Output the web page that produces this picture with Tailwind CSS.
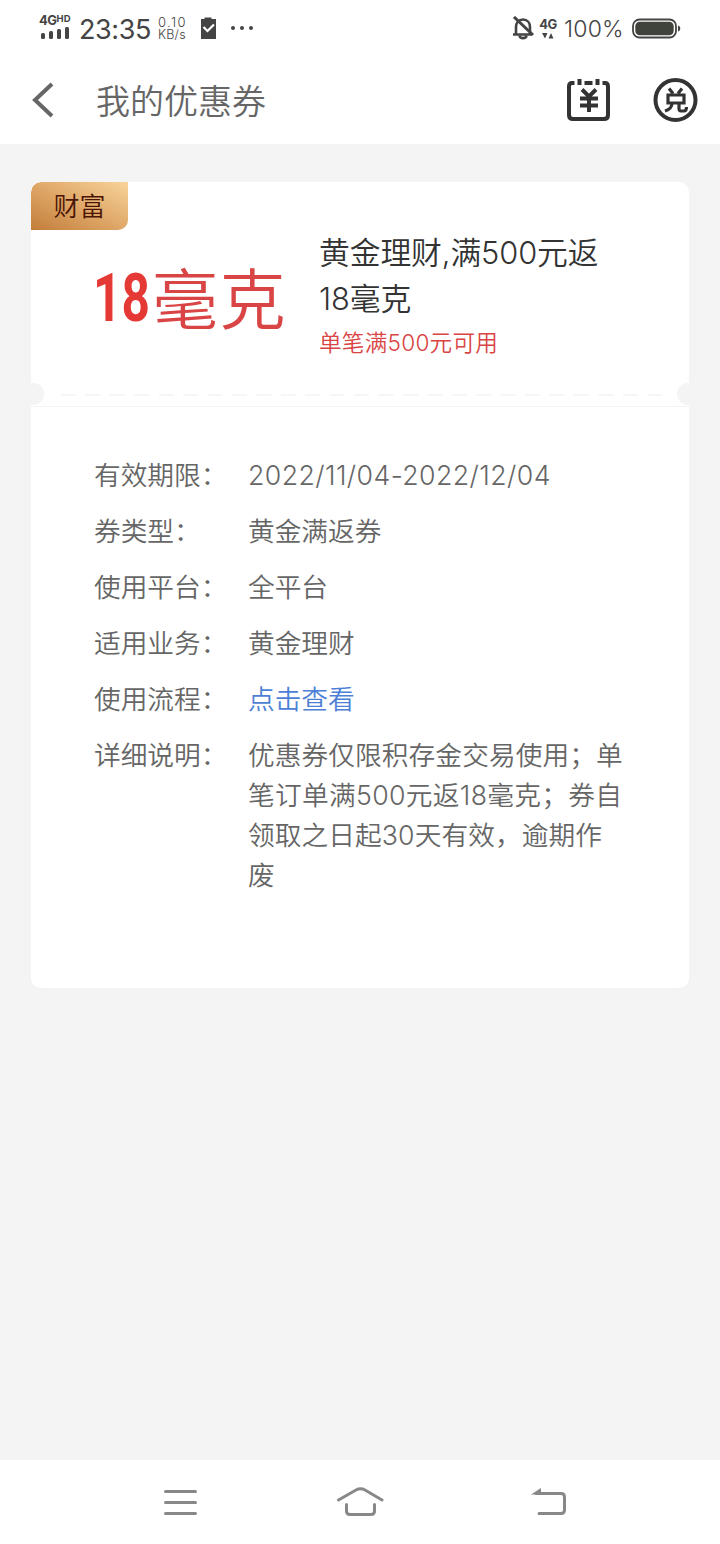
<!DOCTYPE html>
<html lang="zh-CN">
<head>
    <meta charset="UTF-8">
    <meta name="viewport" content="width=device-width, initial-scale=1.0">
    <title>我的优惠券</title>
    <script src="https://cdn.jsdelivr.net/npm/@tailwindcss/browser@4"></script>
</head>
<body class="bg-[#f4f4f4] font-['Inter','Noto_Sans_CJK_SC',sans-serif] font-[350]">
    <div class="flex flex-col w-[720px] h-[1544px] overflow-hidden whitespace-nowrap">
        <!-- Status bar -->
        <div class="flex items-center justify-between h-14 pl-[39px] pr-[39px] bg-white text-[#444]">
            <div class="flex items-center">
                <div class="flex flex-col w-8 -mt-[2px]">
                    <div class="flex items-start h-[12px] leading-[11px] font-bold"><span class="text-[13px] tracking-[-0.5px]">4G</span><span class="text-[9.5px] leading-[8px]">HD</span></div>
                    <svg class="w-8 h-3" viewBox="0 0 32 12" fill="currentColor">
                        <rect x="2" y="6" width="4" height="6" rx="1.5"/>
                        <rect x="10" y="4" width="4" height="8" rx="1.5"/>
                        <rect x="18" y="2" width="4" height="10" rx="1.5"/>
                        <rect x="26" y="0" width="4" height="12" rx="1.5"/>
                    </svg>
                </div>
                <span class="ml-2 w-[79px] pt-[3px] text-[27px] leading-8 font-normal tracking-[-0.4px]">23:35</span>
                <div class="flex flex-col w-[41px] pt-[1px] text-[12.5px] leading-[13px]">
                    <span class="h-[12px] text-[13px] tracking-[1.4px]">0.10</span>
                    <span class="h-[13px] tracking-[0.2px]">KB/s</span>
                </div>
                <svg class="w-5 h-6" viewBox="0 0 20 24">
                    <path fill="currentColor" d="M2 3h3.500V1.500h7V3H17v20H2z"/>
                    <path d="M4.500 11l4 4 6.500-6.500" fill="none" stroke="#fff" stroke-width="2.200"/>
                </svg>
                <svg class="ml-3 w-6 h-4" viewBox="0 0 24 16" fill="currentColor">
                    <circle cx="2" cy="8" r="2"/><circle cx="11" cy="8" r="2"/><circle cx="20" cy="8" r="2"/>
                </svg>
            </div>
            <div class="flex items-center">
                <svg class="w-6 h-6" viewBox="0 0 24 24" fill="none" stroke="currentColor" stroke-width="2.600">
                    <path d="M5 18.500V11c0-4 2.500-7.500 7-7.500S19 7 19 11v7.500M2 18.500h19"/>
                    <path d="M8.500 19.500c.5 3.500 6.500 3.500 7 0" />
                    <path d="M3 1l19 18" stroke-width="3"/>
                </svg>
                <div class="flex flex-col items-center w-[20px] ml-[3px] gap-[2px]">
                    <span class="text-[13px] leading-[12px] font-bold tracking-[-0.5px]">4G</span>
                    <svg class="w-3 h-[7px]" viewBox="0 0 12 7" fill="currentColor"><path d="M0 1h5.500L3 6.500zM6.500 6.500h5L9 1z"/></svg>
                </div>
                <span class="ml-[6px] w-[68px] pt-[2px] text-[23px] leading-8 tracking-[0.2px]">100%</span>
                <svg class="w-[49px] h-[21px]" viewBox="0 0 49 21">
                    <rect x="1" y="1.500" width="43" height="18" rx="6.500" fill="none" stroke="currentColor" stroke-width="1.800"/>
                    <rect x="3.300" y="3.800" width="38.400" height="13.400" rx="4.500" fill="#40423c"/>
                    <path d="M46 7.500c3 .5 3 5.500 0 6z" fill="currentColor"/>
                </svg>
            </div>
        </div>

        <!-- Title bar -->
        <div class="flex items-center h-[88px] pl-[31px] pr-[22px] bg-white text-[#666]">
            <svg class="w-6 h-10" viewBox="0 0 24 40" fill="none" stroke="currentColor" stroke-width="4">
                <path d="M21 4L4 20l17 16"/>
            </svg>
            <h1 class="ml-[41px] grow pt-[4px] text-[34px] leading-10">我的优惠券</h1>
            <svg class="w-[44px] h-[44px] text-[#333]" viewBox="0 0 44 44" fill="none" stroke="currentColor" stroke-width="4">
                <path d="M8.500 5H6Q3 5 3 8.500V37q0 4 4 4h31q4 0 4-4V8.500Q42 5 39 5H36.500M18.500 5h8"/>
                <path d="M13.500 1v6M31.500 1v6"/>
                <path d="M16 11.500l7 7 7-7M14 20.500h18M14 27.500h18M23 18v16"/>
            </svg>
            <svg class="ml-[43px] w-[45px] h-[45px] text-[#333]" viewBox="0 0 45 45" fill="none" stroke="currentColor" stroke-width="4">
                <circle cx="22.500" cy="22" r="20"/>
                <g stroke-width="3.200">
                    <path d="M16 10.500l4 5M29 10.500l-4 5M15 17h16v8H15z"/>
                    <path d="M19 24.500c0 5-2 7-7 8.500M26 24.500v6q0 2.500 2 2.500h3q2.500 0 2.500-4"/>
                </g>
            </svg>
        </div>

        <!-- Coupon -->
        <main class="grow px-[31px] pt-[38px]">
            <div class="relative h-[806px] bg-white rounded-[10px] overflow-hidden">
                <span class="absolute left-0 top-0 w-[97px] h-12 rounded-tl-[10px] rounded-br-[10px] bg-linear-to-tr from-[#c27d3a] via-[#dfa868] to-[#f8d49a] text-center text-[26px] leading-[49px] text-[#4a1505]">财富</span>
                <div class="flex h-[225px] border-b border-[#f4f4f4]">
                    <div class="flex items-start w-[288px] pl-[62px] pt-[70px] text-[#e53935]">
                        <span class="w-[59px] text-[67px] leading-[93px] font-['Roboto'] font-bold"><span class="inline-block origin-left scale-x-[.74]">18</span></span>
                        <span class="text-[66px] leading-[96px] tracking-[1.5px] text-[#d94444]">毫克</span>
                    </div>
                    <div class="pt-[48px] text-[#333]">
                        <p class="text-[30.8px] leading-[46px] tracking-[-0.1px]">黄金理财,满500元返<br>18毫克</p>
                        <p class="text-[22.6px] leading-[42px] tracking-[0.25px] text-[#d94444]">单笔满500元可用</p>
                    </div>
                </div>
                <!-- Tear line -->
                <span class="absolute -left-[9px] top-[201px] size-[22px] rounded-full bg-[#f4f4f4]"></span>
                <span class="absolute -right-[10px] top-[201px] size-[22px] rounded-full bg-[#f4f4f4]"></span>
                <svg class="absolute left-[30px] top-[212px] w-[602px] h-[2px]" viewBox="0 0 602 2"><path d="M0 1h602" stroke="#f6f6f6" stroke-width="2" stroke-dasharray="15 9.430"/></svg>

                <dl class="grid grid-cols-[154px_1fr] gap-y-4 pl-[63px] pt-[48px] text-[26.7px] leading-10 text-[#666]">
                    <dt>有效期限：</dt><dd class="tracking-[0.42px]">2022/11/04-2022/12/04</dd>
                    <dt>券类型：</dt><dd>黄金满返券</dd>
                    <dt>使用平台：</dt><dd>全平台</dd>
                    <dt>适用业务：</dt><dd>黄金理财</dd>
                    <dt>使用流程：</dt><dd><a href="#" class="text-[#4d7fd6]">点击查看</a></dd>
                    <dt>详细说明：</dt><dd class="tracking-[0.08px]">优惠券仅限积存金交易使用；单<br><span class="tracking-[0.32px]">笔订单满500元返18毫克；券自</span><br>领取之日起30天有效，逾期作<br>废</dd>
                </dl>
            </div>
        </main>

        <!-- System navigation -->
        <nav class="flex h-[84px] pl-[163px] pt-[26px] bg-white text-[#888]">
            <svg class="w-[35px] h-8" viewBox="0 0 35 32" fill="none" stroke="currentColor" stroke-width="3" stroke-linecap="round"><path d="M2.500 5.500h30M2.500 16.500h30M2.500 27.500h30"/></svg>
            <svg class="ml-[138px] w-12 h-8" viewBox="0 0 48 32" fill="none" stroke="currentColor" stroke-width="3" stroke-linecap="round">
                <path d="M2.500 14L20 4q4.500-2.500 9 0l17 10M10.500 18.500V25q0 3.500 3.500 3.500h21q3.500 0 3.500-3.500v-6.500"/>
            </svg>
            <svg class="ml-[147px] w-[36px] h-8" viewBox="0 0 36 32" fill="none" stroke="currentColor" stroke-width="3" stroke-linecap="round">
                <path d="M5 7.500h25q3.500 0 3.500 3.500v13q0 3.500-3.500 3.500H8"/>
                <path d="M0 8.500l10-6.500V8.500z" fill="currentColor" stroke="none"/>
            </svg>
        </nav>
    </div>
</body>
</html>
